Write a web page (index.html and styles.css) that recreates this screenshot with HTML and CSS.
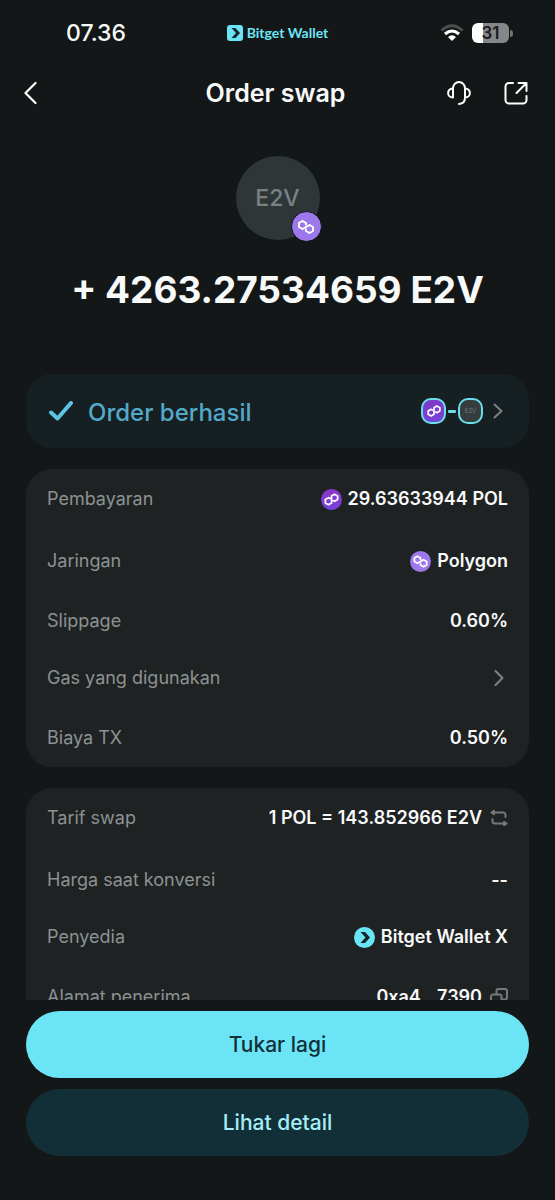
FILE: index.html
```html
<!DOCTYPE html>
<html lang="id">
<head>
<meta charset="utf-8">
<meta name="viewport" content="width=device-width, initial-scale=1">
<title>Order swap</title>
<link rel="stylesheet" href="styles.css">
</head>
<body>
<svg class="defs" aria-hidden="true">
  <defs>
    <symbol id="polygon-mark" viewBox="0 0 24 24">
      <path d="M12 9.500V8L8.500 6 5 8v4l3.500 2 7-4 3.500 2v4l-3.500 2-3.500-2v-1.500"/>
    </symbol>
    <symbol id="pol-mark" viewBox="0 0 24 24">
      <path d="M10 10.700 8.500 10 5 12v4l3.500 2 3.500-2V8l3.500-2L19 8v4l-3.500 2-1.500-.7"/>
    </symbol>
  </defs>
</svg>
<div class="screen">
  <div class="status">
    <span class="status__time">07.36</span>
    <span class="status__app">
      <svg width="16" height="16" viewBox="0 0 16 16" aria-hidden="true"><rect width="16" height="16" rx="3" fill="#6be5f6"/><path d="M4.500 3H8.500L13 8 8.500 13H4.500L9 8Z" fill="#12262e"/></svg>
      Bitget Wallet
    </span>
    <span class="status__icons">
      <svg width="24" height="18" viewBox="0 0 24 18" fill="none" aria-hidden="true"><path d="M1.500 6.500Q12-3 22.500 6.500" stroke="#4b4f50" stroke-width="3"/><path d="M5 10Q12 4 19 10" stroke="#fff" stroke-width="3"/><path d="M8 12.900Q12 9.800 16 12.900L12 17Z" fill="#fff"/></svg>
      <span class="battery">31</span>
    </span>
  </div>

  <header class="header">
    <button class="icon-button" aria-label="Kembali"><svg width="14" height="24" viewBox="0 0 14 24"><path d="M12.500 2 2.500 12l10 10" stroke-width="2.200"/></svg></button>
    <h1 class="header__title">Order swap</h1>
    <div class="header__actions">
      <button class="icon-button" aria-label="Bantuan"><svg width="24" height="24" viewBox="0 0 24 24"><path d="M6 16.500V7.500a6 6.500 0 0 1 12 0v9c0 4-2 6.200-6 6.500M6 7.500C-.5 8-.5 16.500 6 16.500ZM18 7.500c6.500.5 6.500 9 0 9"/></svg></button>
      <button class="icon-button" aria-label="Bagikan"><svg width="24" height="24" viewBox="0 0 24 24"><path d="M9 2H5a3.500 3.500 0 0 0-3.500 3.500v13.500a3.500 3.500 0 0 0 3.500 3.500h14a3.500 3.500 0 0 0 3.500-3.500V15M14.500 2h8v8M22 2.500l-9.500 9.500"/></svg></button>
    </div>
  </header>

  <main class="content">
    <section class="summary">
      <div class="token">E2V
        <span class="token__chain"><svg class="mark" width="24" height="24"><use href="#polygon-mark"/></svg></span>
      </div>
      <h2 class="summary__amount">+ 4263.27534659 E2V</h2>
    </section>

    <button class="result">
      <svg class="result__check" width="24" height="20" viewBox="0 0 24 20" aria-hidden="true"><path d="M2 11.500 8.500 17.500 22 2"/></svg>
      <span class="result__text">Order berhasil</span>
      <span class="route">
        <span class="route__node route__node--pol"><svg class="mark" width="20" height="20"><use href="#pol-mark"/></svg></span>
        <span class="route__link"></span>
        <span class="route__node">E2V</span>
      </span>
      <svg class="chevron" width="10" height="16" viewBox="0 0 10 16"><path d="m1.500 1.500 7 6.500-7 6.500"/></svg>
    </button>

    <dl class="card">
      <div class="row"><dt>Pembayaran</dt><dd><span class="coin coin--pol"><svg class="mark" width="21" height="21"><use href="#pol-mark"/></svg></span>29.63633944 POL</dd></div>
      <div class="row row--far"><dt>Jaringan</dt><dd><span class="coin"><svg class="mark" width="21" height="21"><use href="#polygon-mark"/></svg></span>Polygon</dd></div>
      <div class="row"><dt>Slippage</dt><dd>0.60%</dd></div>
      <div class="row row--near"><dt>Gas yang digunakan</dt><dd><button class="icon-button icon-button--row" aria-label="Lihat gas"><svg class="chevron" width="10" height="16" viewBox="0 0 10 16"><path d="m1.500 1 7 7-7 7"/></svg></button></dd></div>
      <div class="row"><dt>Biaya TX</dt><dd>0.50%</dd></div>
    </dl>

    <dl class="card">
      <div class="row"><dt>Tarif swap</dt><dd>1 POL = 143.852966 E2V<button class="icon-button icon-button--small" aria-label="Balik tarif"><svg width="18" height="16" viewBox="0 0 18 16"><path d="M2 2.500h11a2.500 2.500 0 0 1 2.500 2.500v2M4 .800 1.500 2.500 4 4.200M16 13.500H5A2.500 2.500 0 0 1 2.500 11V9M14 11.800l2.500 1.700-2.500 1.700"/></svg></button></dd></div>
      <div class="row row--far"><dt>Harga saat konversi</dt><dd>--</dd></div>
      <div class="row row--near"><dt>Penyedia</dt><dd><span class="coin coin--bitget"><svg width="21" height="21" viewBox="0 0 21 21"><path d="M6.500 5H11L16 10.500 11 16H6.500L11.500 10.500Z" fill="#14252b"/></svg></span>Bitget Wallet X</dd></div>
      <div class="row"><dt>Alamat penerima</dt><dd>0xa4...7390<button class="icon-button icon-button--small" aria-label="Salin alamat"><svg width="18" height="18" viewBox="0 0 18 18"><path d="M6.500 6V3a2 2 0 0 1 2-2H15a2 2 0 0 1 2 2v6.500a2 2 0 0 1-2 2h-3M3 6.500h6.500a2 2 0 0 1 2 2V15a2 2 0 0 1-2 2H3a2 2 0 0 1-2-2V8.500a2 2 0 0 1 2-2Z"/></svg></button></dd></div>
    </dl>
  </main>

  <footer class="actions">
    <button class="action">Tukar lagi</button>
    <button class="action action--secondary">Lihat detail</button>
  </footer>
</div>
</body>
</html>
```
FILE: styles.css
```css
* { box-sizing: border-box; }

body {
  margin: 0;
  background: #141718;
  color: #f8fafa;
  font-family: Inter, "Liberation Sans", sans-serif;
  font-size: 18px;
  line-height: 24px;
}

h1, h2, dl, dd { margin: 0; }

button {
  padding: 0;
  border: 0;
  background: none;
  color: inherit;
  font: inherit;
  cursor: pointer;
}

svg { display: block; flex: none; }

.defs { position: absolute; width: 0; height: 0; }

.screen {
  display: flex;
  flex-direction: column;
  height: 100vh;
}

/* Status bar */
.status {
  display: grid;
  grid-template-columns: 1fr auto 1fr;
  align-items: center;
  height: 66px;
  padding: 0 46px 0 66px;
}

.status__time { font-size: 23px; font-weight: 500; }

.status__app {
  display: flex;
  align-items: center;
  gap: 4px;
  margin-right: 20px;
  color: #6be5f6;
  font-family: Lato, sans-serif;
  font-size: 14px;
  font-weight: 700;
}

.status__icons {
  display: flex;
  align-items: center;
  justify-content: flex-end;
  gap: 8px;
}

.battery {
  position: relative;
  width: 37px;
  height: 20px;
  border-radius: 6px;
  background: linear-gradient(90deg, #fff 31%, #858788 31%);
  color: #1a1d1e;
  font-size: 17px;
  font-weight: 600;
  line-height: 20px;
  text-align: center;
}

.battery::after {
  content: "";
  position: absolute;
  top: 7px;
  right: -4px;
  width: 3px;
  height: 7px;
  border-radius: 0 3px 3px 0;
  background: #717475;
}

/* Header */
.header {
  display: grid;
  grid-template-columns: 1fr auto 1fr;
  align-items: center;
  height: 54px;
  padding: 0 27px 0 23px;
}

.header__title { font-size: 25px; font-weight: 600; line-height: 32px; }

.header__actions { display: flex; justify-content: flex-end; gap: 33px; }

.icon-button { display: block; width: max-content; }

.icon-button svg {
  fill: none;
  stroke: #fff;
  stroke-width: 2;
  stroke-linecap: round;
  stroke-linejoin: round;
}

/* Scrolling content */
.content {
  flex: 1;
  min-height: 0;
  overflow: hidden;
  padding: 36px 26px 0;
}

.summary {
  display: flex;
  flex-direction: column;
  align-items: center;
  gap: 26px;
  margin-bottom: 60px;
}

.token {
  position: relative;
  display: grid;
  place-items: center;
  width: 84px;
  height: 84px;
  border-radius: 50%;
  background: #2f3638;
  color: #788284;
  font-size: 23px;
  font-weight: 500;
}

.token__chain {
  position: absolute;
  right: -2px;
  bottom: -2px;
  display: grid;
  place-items: center;
  width: 31px;
  height: 31px;
  border: 1px solid #101016;
  border-radius: 50%;
  background: #9d78ea;
}

.mark {
  fill: none;
  stroke: #fff;
  stroke-width: 2;
  stroke-linejoin: round;
  stroke-linecap: round;
}

.summary__amount { font-size: 37px; font-weight: 700; line-height: 48px; }

.result {
  display: flex;
  align-items: center;
  width: 100%;
  height: 74px;
  margin-bottom: 21px;
  padding: 0 26px 0 23px;
  border-radius: 26px;
  background: #161f21;
}

.result__check {
  fill: none;
  stroke: #5cc4e4;
  stroke-width: 4;
  stroke-linecap: round;
  stroke-linejoin: round;
}

.result__text {
  flex: 1;
  margin-left: 15px;
  padding-top: 3px;
  color: #53a9c9;
  font-size: 24px;
  font-weight: 500;
  line-height: 32px;
  text-align: left;
}

.route { display: flex; align-items: center; gap: 2px; margin-right: 10px; }

.route__node {
  display: grid;
  place-items: center;
  width: 25px;
  height: 26px;
  border: 2px solid #6adeeb;
  border-radius: 10px;
  background: #353d3f;
  color: #727a7c;
  font-size: 6px;
  line-height: 8px;
}

.route__node--pol { background: linear-gradient(#8038c8, #7443d7); }

.route__link { width: 8px; height: 3px; border-radius: 1px; background: #6adeeb; }

.chevron {
  fill: none;
  stroke: #7d8383;
  stroke-width: 2;
  stroke-linecap: round;
  stroke-linejoin: round;
}

/* Detail cards */
.card {
  margin-bottom: 21px;
  padding: 18px 21px 17px;
  border-radius: 26px;
  background: #1f2223;
}

.row { display: flex; justify-content: space-between; height: 24px; }
.row + .row { margin-top: 36px; }
.row + .row--far { margin-top: 38px; }
.row + .row--near { margin-top: 33px; }

.row dt { color: #8b9291; }

.row dd {
  display: flex;
  align-items: center;
  font-weight: 600;
}

.coin {
  width: 21px;
  height: 21px;
  margin-right: 6px;
  border-radius: 50%;
  background: #9d78ea;
}

.coin--pol { background: linear-gradient(#8a35c4, #7443da); }
.coin--bitget { background: #6be5f6; }

.icon-button--row { margin-right: 4px; }
.icon-button--row svg { stroke: #7d8383; }
.icon-button--small { margin-left: 8px; }
.icon-button--small svg { stroke: #737979; }

/* Bottom actions */
.actions {
  display: flex;
  flex-direction: column;
  gap: 11px;
  padding: 11px 26px 44px;
}

.action {
  height: 67px;
  border-radius: 34px;
  background: #6be5f5;
  color: #12303a;
  font-size: 21px;
  font-weight: 500;
}

.action--secondary { background: #122e37; color: #a5eef8; }
```
